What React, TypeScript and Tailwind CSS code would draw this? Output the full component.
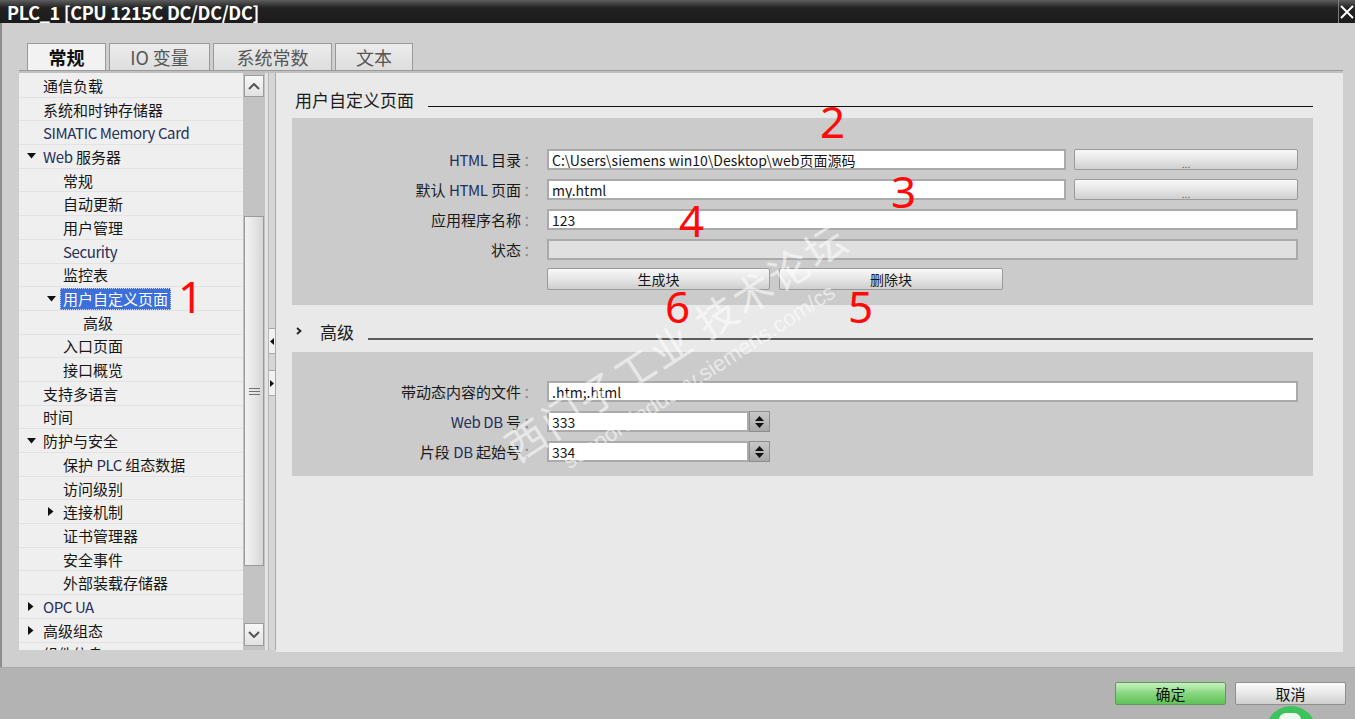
import React from "react"

type TreeNode = {
  label: string
  level: 0 | 1 | 2
  arrow?: "down" | "right"
  selected?: boolean
}

const TREE: TreeNode[] = [
  { label: "通信负载", level: 0 },
  { label: "系统和时钟存储器", level: 0 },
  { label: "SIMATIC Memory Card", level: 0 },
  { label: "Web 服务器", level: 0, arrow: "down" },
  { label: "常规", level: 1 },
  { label: "自动更新", level: 1 },
  { label: "用户管理", level: 1 },
  { label: "Security", level: 1 },
  { label: "监控表", level: 1 },
  { label: "用户自定义页面", level: 1, arrow: "down", selected: true },
  { label: "高级", level: 2 },
  { label: "入口页面", level: 1 },
  { label: "接口概览", level: 1 },
  { label: "支持多语言", level: 0 },
  { label: "时间", level: 0 },
  { label: "防护与安全", level: 0, arrow: "down" },
  { label: "保护 PLC 组态数据", level: 1 },
  { label: "访问级别", level: 1 },
  { label: "连接机制", level: 1, arrow: "right" },
  { label: "证书管理器", level: 1 },
  { label: "安全事件", level: 1 },
  { label: "外部装载存储器", level: 1 },
  { label: "OPC UA", level: 0, arrow: "right" },
  { label: "高级组态", level: 0, arrow: "right" },
  { label: "组件信息", level: 0 },
]

const INDENT = ["pl-[8px]", "pl-[28px]", "pl-[48px]"]

// latin runs are rendered slightly navy, like the ClearType text in the original
function Mixed({ text }: { text: string }) {
  const parts = text.split(/([A-Za-z][A-Za-z .]*[A-Za-z]|[A-Za-z])/)
  return (
    <>
      {parts.map((p, i) =>
        /[A-Za-z]/.test(p) ? (
          <span key={i} className="text-[#25305a] tracking-[-0.4px]">
            {p}
          </span>
        ) : (
          <span key={i}>{p}</span>
        )
      )}
    </>
  )
}

function TriDown({ className = "" }: { className?: string }) {
  return (
    <svg width="9" height="6" viewBox="0 0 9 6" className={className}>
      <path d="M0 0h9L4.5 5.5z" fill="#111" />
    </svg>
  )
}

function TriRight({ className = "" }: { className?: string }) {
  return (
    <svg width="6" height="9" viewBox="0 0 6 9" className={className}>
      <path d="M0 0v9l5.5-4.5z" fill="#111" />
    </svg>
  )
}

function Tree() {
  return (
    <div className="w-[224px] h-full overflow-hidden bg-[#efefef] pt-px">
      {TREE.map((n) => (
        <div
          key={n.label}
          className={`flex items-center h-[23.7px] border-b border-[#e2e2e2] ${INDENT[n.level]}`}
        >
          <div className="w-[16px] flex items-center">
            {n.arrow === "down" && <TriDown />}
            {n.arrow === "right" && <TriRight className="ml-[1px]" />}
          </div>
          {n.selected ? (
            <span className="-ml-[3px] px-[2px] h-[22px] flex items-center bg-[#3b6fdc] text-white text-[15px] border border-dotted border-[#c9d6f5] leading-none">
              {n.label}
            </span>
          ) : (
            <span className="text-[15px] text-[#161616] leading-none whitespace-nowrap">
              <Mixed text={n.label} />
            </span>
          )}
        </div>
      ))}
    </div>
  )
}

function ScrollButton({ dir }: { dir: "up" | "down" }) {
  return (
    <div className="mx-px h-full border border-[#9c9c9c] bg-gradient-to-b from-[#f7f7f7] to-[#e2e2e2] flex items-center justify-center">
      <svg width="12" height="7" viewBox="0 0 12 7">
        <path
          d={dir === "up" ? "M1 6l5-5 5 5" : "M1 1l5 5 5-5"}
          stroke="#555"
          strokeWidth="2"
          fill="none"
        />
      </svg>
    </div>
  )
}

function ScrollBar() {
  return (
    <div className="w-[22px] h-full bg-[#c3c3c3] flex flex-col">
      <div className="h-[22px] mt-[2px]">
        <ScrollButton dir="up" />
      </div>
      <div className="h-[119px]" />
      <div className="h-[350px] mx-px border border-[#9a9a9a] bg-gradient-to-r from-[#f2f2f2] via-[#e6e6e6] to-[#d6d6d6] flex items-center justify-center">
        <div className="flex flex-col gap-[2px]">
          <div className="w-[11px] h-px bg-[#707070]" />
          <div className="w-[11px] h-px bg-[#707070]" />
          <div className="w-[11px] h-px bg-[#707070]" />
        </div>
      </div>
      <div className="flex-1" />
      <div className="h-[23px] mb-[4px]">
        <ScrollButton dir="down" />
      </div>
    </div>
  )
}

function Splitter() {
  return (
    <div className="w-[11px] h-full flex">
      <div className="w-[3px] bg-[#e4e4e4]" />
      <div className="w-px bg-[#b4b4b4]" />
      <div className="flex-1 bg-[#d6d6d6] flex flex-col pt-[255px] gap-[16px]">
        <div className="h-[26px] bg-[#f2f2f2] border-y border-[#a8a8a8] flex items-center pl-[1px]">
          <svg width="4" height="7" viewBox="0 0 4 7">
            <path d="M4 0v7L0 3.5z" fill="#111" />
          </svg>
        </div>
        <div className="h-[26px] bg-[#f2f2f2] border-y border-[#a8a8a8] flex items-center pl-[1px]">
          <svg width="4" height="7" viewBox="0 0 4 7">
            <path d="M0 0v7l4-3.5z" fill="#111" />
          </svg>
        </div>
      </div>
      <div className="w-px bg-[#a9a9a9]" />
    </div>
  )
}

function SectionHeader({ title, chevron }: { title: string; chevron?: boolean }) {
  return (
    <div className="flex items-center h-[22px]">
      {chevron ? (
        <div className="w-[28px] pl-[4px] flex items-center">
          <svg width="6" height="8" viewBox="0 0 6 8">
            <path d="M1 1l3.5 3L1 7" stroke="#222" strokeWidth="1.8" fill="none" />
          </svg>
        </div>
      ) : (
        <div className="w-[3px]" />
      )}
      <span className="text-[17px] text-[#1c1c1c] leading-none whitespace-nowrap">{title}</span>
      <div
        className={`flex-1 ml-[14px] ${chevron ? "mt-[16px] h-[2px] bg-[#5c5c5c]" : "mt-[14px] h-px bg-[#111]"}`}
      />
    </div>
  )
}

function FieldRow({ label, children }: { label: string; children: React.ReactNode }) {
  return (
    <div className="flex items-center h-[21px]">
      <div className="w-[229px] text-right text-[15px] text-[#1a1a1a] leading-none whitespace-nowrap">
        <Mixed text={label} />
      </div>
      <div className="w-[26px] pl-[2px] text-[15px] text-[#8c8c8c] leading-none">：</div>
      <div className="flex-1 flex h-full gap-[8px]">{children}</div>
    </div>
  )
}

function TextBox({ value, disabled, className = "flex-1" }: { value?: string; disabled?: boolean; className?: string }) {
  return (
    <div
      className={`${className} h-full border-2 border-[#aaaaaa] flex items-center pl-[3px] text-[14px] text-[#161616] leading-none whitespace-nowrap overflow-hidden ${
        disabled ? "bg-[#e0e0e0]" : "bg-white"
      }`}
    >
      {value}
    </div>
  )
}

function PushButton({ children, className = "" }: { children: React.ReactNode; className?: string }) {
  return (
    <div
      className={`${className} h-full rounded-[2px] border border-[#9a9a9a] bg-gradient-to-b from-[#f8f8f8] via-[#e6e6e6] to-[#cfcfcf] flex items-center justify-center text-[14px] text-[#151515] leading-none`}
    >
      {children}
    </div>
  )
}

function Spin({ value }: { value: string }) {
  return (
    <div className="flex h-full">
      <TextBox value={value} className="w-[202px]" />
      <div className="w-[21px] h-full border border-[#8e8e8e] bg-gradient-to-b from-[#c8c8c8] to-[#a9a9a9] flex flex-col items-center justify-center gap-[2px]">
        <svg width="9" height="5" viewBox="0 0 9 5">
          <path d="M0 5h9L4.5 0z" fill="#111" />
        </svg>
        <svg width="9" height="5" viewBox="0 0 9 5">
          <path d="M0 0h9L4.5 5z" fill="#111" />
        </svg>
      </div>
    </div>
  )
}

function RightPanel() {
  return (
    <div className="flex-1 h-full bg-[#e9e9e9] pt-[15px] pl-[16px] pr-[30px]">
      <SectionHeader title="用户自定义页面" />
      <div className="mt-[8px] bg-[#cbcbcb] pt-[31px] pb-[15px] pr-[15px] flex flex-col gap-[9px]">
        <FieldRow label="HTML 目录">
          <TextBox value="C:\Users\siemens win10\Desktop\web页面源码" />
          <PushButton className="w-[224px]">
            <span className="text-[10px] text-[#555] mt-[8px]">...</span>
          </PushButton>
        </FieldRow>
        <FieldRow label="默认 HTML 页面">
          <TextBox value="my.html" />
          <PushButton className="w-[224px]">
            <span className="text-[10px] text-[#555] mt-[8px]">...</span>
          </PushButton>
        </FieldRow>
        <FieldRow label="应用程序名称">
          <TextBox value="123" />
        </FieldRow>
        <FieldRow label="状态">
          <TextBox disabled />
        </FieldRow>
        <div className="flex h-[22px] mt-[-1px] pl-[255px] gap-[9px]">
          <PushButton className="w-[223px]">生成块</PushButton>
          <PushButton className="w-[224px]">删除块</PushButton>
        </div>
      </div>

      <div className="mt-[15px]">
        <SectionHeader title="高级" chevron />
      </div>
      <div className="mt-[10px] bg-[#cbcbcb] pt-[29px] pb-[14px] pr-[15px] flex flex-col gap-[9px]">
        <FieldRow label="带动态内容的文件">
          <TextBox value=".htm;.html" />
        </FieldRow>
        <FieldRow label="Web DB 号">
          <Spin value="333" />
        </FieldRow>
        <FieldRow label="片段 DB 起始号">
          <Spin value="334" />
        </FieldRow>
      </div>
    </div>
  )
}

const TABS = ["常规", "IO 变量", "系统常数", "文本"]
const TAB_W = ["w-[79px]", "w-[101px]", "w-[119px]", "w-[78px]"]

function Tabs() {
  return (
    <div className="flex items-end h-[27px] pl-[25px] gap-[3px]">
      {TABS.map((t, i) => (
        <div
          key={t}
          className={`${TAB_W[i]} h-[27px] border border-b-0 border-[#999] flex items-center justify-center text-[18px] leading-none ${
            i === 0
              ? "bg-[#f2f2f2] font-bold text-[#111]"
              : "bg-gradient-to-b from-[#ececec] to-[#dedede] text-[#555]"
          }`}
        >
          {t}
        </div>
      ))}
    </div>
  )
}

function Annotation({ n, className }: { n: string; className: string }) {
  return (
    <span
      className={`absolute font-['Noto_Sans',sans-serif] text-[44px] leading-none text-[#ff0a0a] ${className}`}
    >
      {n}
    </span>
  )
}

export default function App() {
  return (
    <div className="relative w-[1355px] h-[719px] overflow-hidden bg-[#cfcfcf] font-['Noto_Sans_CJK_SC',sans-serif] select-none">
      {/* title bar */}
      <div className="h-[23px] flex bg-gradient-to-b from-[#5e5e5e] via-[#222] via-35% to-[#1b1b1b]">
        <div className="flex-1 pl-[7px] flex items-center text-white text-[18px] font-semibold leading-none tracking-[-0.3px]">
          PLC_1 [CPU 1215C DC/DC/DC]
        </div>
        <div className="w-px bg-[#7c7c7c]" />
        <div className="w-[16px] flex items-center justify-center">
          <svg width="14" height="14" viewBox="0 0 14 14">
            <path d="M1 1l12 12M13 1L1 13" stroke="#fff" strokeWidth="2" />
          </svg>
        </div>
      </div>

      {/* dialog body */}
      <div className="h-[644px] border-l-2 border-[#8d8d8d] pt-[20px] flex flex-col">
        <Tabs />
        <div className="ml-[17px] w-[1324px] h-[582px] flex flex-col">
          <div className="h-px bg-[#9a9a9a]" />
          <div className="h-[2px] bg-[#c0c0c0]" />
          <div className="flex-1 flex min-h-0">
            <div className="h-[577px] flex">
              <Tree />
              <ScrollBar />
              <Splitter />
            </div>
            <RightPanel />
          </div>
        </div>
      </div>

      {/* footer */}
      <div className="h-[52px] bg-[#b3b3b3] border-t border-[#a9a9a9] flex justify-end items-start pt-[14px] pr-[9px] gap-[9px]">
        <div className="w-[111px] h-[23px] rounded-[2px] border border-[#5f9a5c] bg-gradient-to-b from-[#c8f0c0] via-[#86d67e] to-[#5fc257] flex items-center justify-center text-[15px] text-[#111] leading-none">
          确定
        </div>
        <div className="w-[111px] h-[23px] rounded-[2px] border border-[#8f8f8f] bg-gradient-to-b from-[#fbfbfb] via-[#e8e8e8] to-[#cfcfcf] flex items-center justify-center text-[15px] text-[#111] leading-none">
          取消
        </div>
      </div>

      {/* red callouts */}
      <Annotation n="1" className="left-[178px] top-[274px]" />
      <Annotation n="2" className="left-[820px] top-[99px]" />
      <Annotation n="3" className="left-[891px] top-[169px]" />
      <Annotation n="4" className="left-[679px] top-[198px]" />
      <Annotation n="6" className="left-[665px] top-[284px]" />
      <Annotation n="5" className="left-[848px] top-[284px]" />

      {/* forum watermark */}
      <div className="absolute left-[505px] top-[318px] w-[360px] flex flex-col items-center -rotate-[33deg] pointer-events-none text-white/55">
        <div className="text-[40px] leading-none tracking-[3px] whitespace-nowrap">西门子工业 技术论坛</div>
        <div className="mt-[12px] font-['Liberation_Sans',sans-serif] text-[22px] leading-none whitespace-nowrap">
          support.industry.siemens.com/cs
        </div>
      </div>

      {/* corner badge */}
      <div className="absolute left-[1266px] top-[706px] w-[50px] h-[50px] rounded-full bg-[#3dc35c]">
        <div className="absolute left-[13px] top-[7px] w-[22px] h-[14px] rounded-full bg-white/90" />
      </div>
    </div>
  )
}
